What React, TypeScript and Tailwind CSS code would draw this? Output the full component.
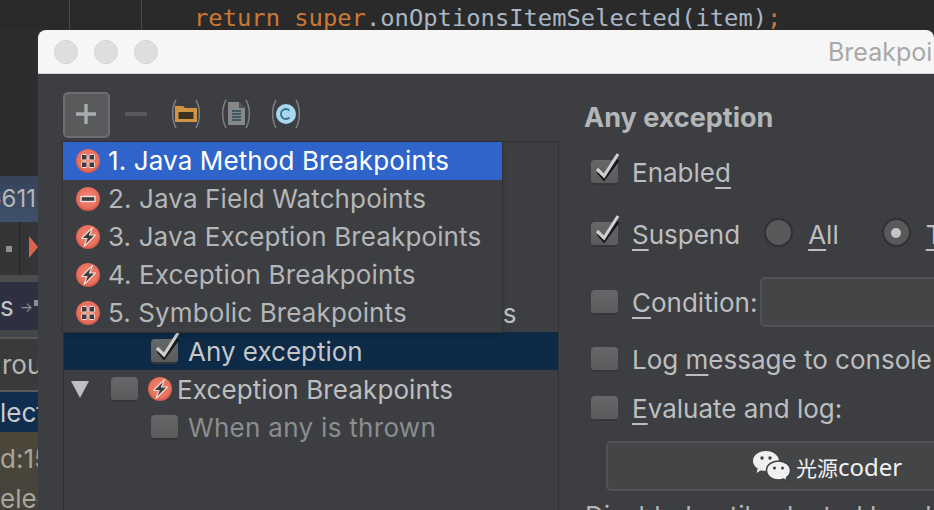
import type { ReactNode } from 'react';

const uiFont = "font-['Inter','Noto_Sans',sans-serif]";

function Parens({ children }: { children: ReactNode }) {
  return (
    <svg width="28" height="30" viewBox="0 0 28 30" fill="none">
      <path d="M4 1 C-0.500 9 -0.500 21 4 29" stroke="#7b7d7f" strokeWidth="1.6" />
      <path d="M24 1 C28.500 9 28.500 21 24 29" stroke="#7b7d7f" strokeWidth="1.6" />
      {children}
    </svg>
  );
}

type BpKind = 'method' | 'field' | 'exception';

function BreakpointIcon({ kind }: { kind: BpKind }) {
  return (
    <svg width="24" height="24" viewBox="0 0 24 24" className="shrink-0">
      <defs>
        <radialGradient id={`bp-${kind}`} cx="50%" cy="45%" r="55%">
          <stop offset="0%" stopColor="#f08a78" />
          <stop offset="75%" stopColor="#e9705f" />
          <stop offset="100%" stopColor="#cf5548" />
        </radialGradient>
      </defs>
      <circle cx="12" cy="12" r="12" fill={`url(#bp-${kind})`} />
      {kind === 'method' && (
        <g fill="#3a3c3f" stroke="#f6d9d0" strokeWidth="1">
          <rect x="5.500" y="5.500" width="5.500" height="5.500" rx="1" />
          <rect x="13" y="5.500" width="5.500" height="5.500" rx="1" />
          <rect x="5.500" y="13" width="5.500" height="5.500" rx="1" />
          <rect x="13" y="13" width="5.500" height="5.500" rx="1" />
        </g>
      )}
      {kind === 'field' && <rect x="5" y="9.500" width="14" height="5" fill="#3a3c3f" stroke="#f6ddd5" strokeWidth="1.4" />}
      {kind === 'exception' && (
        <path d="M16.500 2.500 L5.500 13.500 H11 L8 21.500 L19.500 10 H13.500 Z" fill="#3a3c3f" stroke="#f6ddd5" strokeWidth="1.1" strokeLinejoin="round" />
      )}
    </svg>
  );
}

function Checkbox({ checked = false }: { checked?: boolean }) {
  return (
    <div className="relative h-[25px] w-[27px] shrink-0 rounded-[4px] border-b-2 border-[#343638] bg-gradient-to-b from-[#666768] to-[#5a5b5c]">
      {checked && (
        <svg width="34" height="34" viewBox="0 0 34 34" fill="none" className="absolute -top-[10px] left-0">
          <path d="M7 22 L13 29 L27 10" stroke="#17181a" strokeWidth="3.2" />
          <path d="M6 19 L13 26 L27 4" stroke="#cfcfcf" strokeWidth="3.2" />
        </svg>
      )}
    </div>
  );
}

function Radio({ selected = false }: { selected?: boolean }) {
  return (
    <div className="-mt-[3px] flex h-[29px] w-[29px] shrink-0 items-center justify-center rounded-full border-2 border-[#2f3133] bg-[#58595b]">
      {selected && <div className="h-[10px] w-[10px] rounded-full bg-[#c4c4c4]" />}
    </div>
  );
}

function U({ children }: { children: ReactNode }) {
  return <span className="underline decoration-[1.5px] underline-offset-[5px]">{children}</span>;
}

const menuItems: { label: string; kind: BpKind; active?: boolean }[] = [
  { label: '1. Java Method Breakpoints', kind: 'method', active: true },
  { label: '2. Java Field Watchpoints', kind: 'field' },
  { label: '3. Java Exception Breakpoints', kind: 'exception' },
  { label: '4. Exception Breakpoints', kind: 'exception' },
  { label: '5. Symbolic Breakpoints', kind: 'method' },
];

export default function App() {
  return (
    <div className={`flex h-[510px] w-[934px] flex-col overflow-hidden bg-[#2c2d2f] ${uiFont}`}>
      {/* Editor line behind the dialog */}
      <div className="flex h-[30px] shrink-0 items-center overflow-hidden bg-[#2a2a2b]">
        <div className="h-full w-[70px] border-r border-[#4a4b4d]" />
        <div className="h-full w-[72px] border-r border-[#4a4b4d]" />
        <div className="mt-[7px] ml-[52px] whitespace-nowrap font-['DejaVu_Sans_Mono',monospace] text-[23.8px] text-[#a9b7c6]">
          <span className="text-[#cc7832]">return super</span>.onOptionsItemSelected(item)<span className="text-[#cc7832]">;</span>
        </div>
      </div>

      <div className="flex min-h-0 flex-1">
        {/* IDE side strip */}
        <div className="w-[38px] shrink-0 overflow-hidden whitespace-nowrap text-[26px] text-[#b4b6b8]">
          <div className="h-[146px]" />
          <div className="flex h-[46px] items-center justify-end bg-gradient-to-b from-[#36445a] to-[#40506a] pr-[2px] text-[24px]">6611</div>
          <div className="flex h-[53px] items-center bg-[#343536]">
            <span className="ml-[6px] h-[6px] w-[6px] bg-[#8f9092]" />
            <div className="ml-[7px] h-full border-l border-[#232425] pl-[9px] pt-[14px]">
              <div className="h-0 w-0 border-y-[11px] border-l-[9px] border-y-transparent border-l-[#d9634c]" />
            </div>
          </div>
          <div className="h-[7px] bg-[#4b4c4e]" />
          <div className="flex h-[48px] items-center bg-[#2c3040] text-[#c0c2c4]">
            s<span className="ml-[6px] text-[14px] text-[#8f9092]">→</span>
            <span className="mb-[6px] ml-[1px] h-[6px] w-[5px] bg-[#8f9092]" />
          </div>
          <div className="h-[7px] bg-[#44464a]" />
          <div className="flex h-[55px] items-center border-t-2 border-b-2 border-t-[#55565a] border-b-[#5a5b5d] bg-[#3a3a3b] pl-[2px]">rough</div>
          <div className="flex h-[40px] items-center bg-[#0f2d4f] text-[#c8cacc]">lect</div>
          <div className="h-[78px] bg-gradient-to-b from-[#4d4739] to-[#45423b] pt-[7px] leading-[40px] text-[#a8a59c]">
            <div>d:15</div>
            <div>elec</div>
          </div>
        </div>

        {/* Breakpoints dialog */}
        <div className="flex min-w-0 flex-1 flex-col overflow-hidden rounded-t-[8px] bg-[#3c3e41]">
          <div className="flex h-[44px] shrink-0 items-center gap-[16px] border-b border-[#d2d2d2] bg-[#f6f6f6] pl-[16px]">
            <div className="h-[24px] w-[24px] shrink-0 rounded-full border border-[#d4d4d4] bg-[#dedede]" />
            <div className="h-[24px] w-[24px] shrink-0 rounded-full border border-[#d4d4d4] bg-[#dedede]" />
            <div className="h-[24px] w-[24px] shrink-0 rounded-full border border-[#d4d4d4] bg-[#dedede]" />
            <span className="ml-[654px] mt-[3px] whitespace-nowrap text-[25px] text-[#a8a8a8]">Breakpoints</span>
          </div>

          <div className="flex min-h-0 flex-1">
            {/* Left column: toolbar and tree */}
            <div className="flex w-[521px] shrink-0 flex-col pl-[25px]">
              <div className="flex h-[67px] shrink-0 items-start pt-[18px]">
                <div className="flex h-[46px] w-[47px] shrink-0 items-center justify-center rounded-[5px] border-2 border-[#6c6e70] bg-[#595a5c]">
                  <svg width="22" height="22" viewBox="0 0 22 22" className="-ml-[2px] -mt-[2px]">
                    <path d="M11 1 V21 M1 11 H21" stroke="#a9abad" strokeWidth="3.4" />
                  </svg>
                </div>
                <svg width="22" height="4" viewBox="0 0 22 4" className="ml-[15px] mt-[20px] shrink-0">
                  <rect width="22" height="4" fill="#57595b" />
                </svg>
                <div className="ml-[25px] mt-[7px] flex gap-[22px]">
                  <Parens>
                    <path d="M3 7 H11 L13 9 H25 V23 H3 Z" fill="#cf9545" />
                    <rect x="6.500" y="13" width="15" height="7" fill="#3a3324" />
                  </Parens>
                  <Parens>
                    <path d="M6 3 H17 L23 9 V26 H6 Z" fill="#85888b" />
                    <path d="M17 3 V9 H23" fill="#4e5052" />
                    <path d="M10 12 H19 M10 15 H19 M10 18 H19 M10 21 H19" stroke="#2a4a5a" strokeWidth="1.4" />
                  </Parens>
                  <Parens>
                    <circle cx="14" cy="15" r="10" fill="#a8d8ef" />
                    <path d="M17.500 11.500 A5 5 0 1 0 17.500 18.500" stroke="#3c6f8c" strokeWidth="1.8" fill="none" />
                  </Parens>
                </div>
              </div>

              <div className="relative min-h-0 flex-1 border-x border-t border-[#303234] pt-[152px] text-[26px] text-[#bcbec0]">
                <div className="flex h-[38px] items-center whitespace-nowrap pl-[113px]">Java Exception Breakpoints</div>
                <div className="flex h-[38px] items-center gap-[10px] whitespace-nowrap bg-[#0d2a47] pl-[87px] text-[#c4c6c8]">
                  <Checkbox checked />
                  Any exception
                </div>
                <div className="flex h-[38px] items-center whitespace-nowrap tracking-[0.1px]">
                  <div className="ml-[7px] h-0 w-0 border-x-[9px] border-t-[17px] border-x-transparent border-t-[#bdbfc1]" />
                  <div className="ml-[22px]">
                    <Checkbox />
                  </div>
                  <div className="ml-[10px] mr-[5px]">
                    <BreakpointIcon kind="exception" />
                  </div>
                  Exception Breakpoints
                </div>
                <div className="flex h-[38px] items-center gap-[10px] whitespace-nowrap pl-[87px] tracking-[0.3px] text-[#8b8d8f]">
                  <Checkbox />
                  When any is thrown
                </div>

                {/* Add-breakpoint popup */}
                <div className="absolute -left-[2px] -top-[1px] w-[441px] border border-[#2f3133] bg-[#3c3e41] shadow-md">
                  {menuItems.map((item) => (
                    <div
                      key={item.label}
                      className={`flex h-[38px] items-center gap-[8px] whitespace-nowrap pl-[13px] text-[26px] tracking-[0.12px] ${
                        item.active ? 'bg-[#2f65ca] text-white' : 'text-[#b4b6b8]'
                      }`}
                    >
                      <BreakpointIcon kind={item.kind} />
                      <span className="-mt-[2px]">{item.label}</span>
                    </div>
                  ))}
                </div>
              </div>
            </div>

            {/* Right column: properties */}
            <div className="min-w-0 flex-1 overflow-hidden whitespace-nowrap pl-[26px] text-[26px] text-[#bcbec0]">
              <div className="-ml-[1px] mt-[25px] flex h-[38px] items-center text-[27px] font-bold text-[#b4b6b8]">Any exception</div>
              <div className="mt-[20px] flex h-[30px] items-center gap-[14px] pl-[6px]">
                <Checkbox checked />
                <span>Enable<U>d</U></span>
              </div>
              <div className="mt-[32px] flex h-[30px] items-center pl-[6px]">
                <Checkbox checked />
                <span className="ml-[14px]"><U>S</U>uspend</span>
                <div className="ml-[24px]"><Radio /></div>
                <span className="ml-[15px]"><U>A</U>ll</span>
                <div className="ml-[43px]">
                  <Radio selected />
                </div>
                <span className="ml-[15px]"><U>T</U>hread</span>
              </div>
              <div className="mt-[28px] flex h-[50px] items-center pl-[6px]">
                <Checkbox />
                <span className="ml-[14px] w-[128px] shrink-0"><U>C</U>ondition:</span>
                <div className="h-full w-[300px] shrink-0 rounded-[5px] border-2 border-[#505254] bg-[#434547]" />
              </div>
              <div className="mt-[17px] flex h-[30px] items-center gap-[14px] pl-[6px]">
                <Checkbox />
                <span>Log <U>m</U>essage to console</span>
              </div>
              <div className="mt-[19px] flex h-[30px] items-center gap-[14px] pl-[6px]">
                <Checkbox />
                <span><U>E</U>valuate and log:</span>
              </div>
              <div className="relative ml-[21px] mt-[18px] h-[50px] w-[400px] rounded-[5px] border-2 border-[#505254] bg-[#434547]">
                {/* Watermark */}
                <div className="absolute left-[145px] top-[6px] flex items-center gap-[5px] font-['Noto_Sans','Noto_Sans_CJK_SC',sans-serif] text-[24px] text-[#f2f2f2]">
                  <svg width="38" height="32" viewBox="0 0 38 32" className="shrink-0">
                    <path d="M13 0 C20 0 26 4.500 26 10 C26 15.500 20 20 13 20 C11 20 9.500 19.700 8 19.200 L3.500 22 L4.700 17.500 C1.800 15.700 0 13 0 10 C0 4.500 6 0 13 0 Z" fill="#f0f0f0" />
                    <circle cx="9" cy="7" r="1.700" fill="#3c3e41" />
                    <circle cx="17" cy="7" r="1.700" fill="#3c3e41" />
                    <path d="M25.500 10 C32 10 37.500 14 37.500 19.500 C37.500 22.500 36 24.800 33.500 26.500 L34.500 30 L30.500 28 C29 28.600 27.300 29 25.500 29 C19 29 13.500 24.800 13.500 19.500 C13.500 14 19 10 25.500 10 Z" fill="#f0f0f0" stroke="#3c3e41" strokeWidth="1.500" />
                    <circle cx="21.500" cy="17" r="1.500" fill="#3c3e41" />
                    <circle cx="29.500" cy="17" r="1.500" fill="#3c3e41" />
                  </svg>
                  <span className="whitespace-nowrap"><span className="text-[21px]">光源</span>coder</span>
                </div>
              </div>
              <div className="mt-[10px] leading-[30px] text-[#b4b6b8]">Disabled until selected breakpoint</div>
            </div>
          </div>
        </div>
      </div>
    </div>
  );
}
